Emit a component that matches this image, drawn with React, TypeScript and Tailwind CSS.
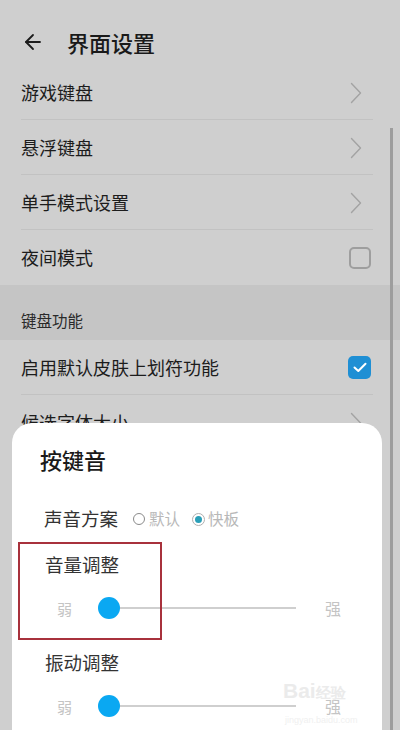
import React from "react";
import { ArrowLeft } from "lucide-react";

const font = { fontFamily: '"Noto Sans CJK SC", "Noto Sans", sans-serif' };

function Chevron() {
  return (
    <svg width="12" height="22" viewBox="0 0 12 22" fill="none" className="mr-[9px]">
      <path d="M1.5 1.5 L10.5 11 L1.5 20.5" stroke="#a3a3a3" strokeWidth="1.4" strokeLinecap="round" strokeLinejoin="round" />
    </svg>
  );
}

function Row({ label, right, divider = true }: { label: string; right: React.ReactNode; divider?: boolean }) {
  return (
    <div className="h-[55px] flex items-center pl-[21px] pr-[29px] relative">
      <span className="text-[18px] text-[#1c1c1c] flex-1">{label}</span>
      {right}
      {divider && <div className="absolute left-[21px] right-[27px] bottom-0 h-px bg-[#c2c2c2]" />}
    </div>
  );
}

function Slider() {
  return (
    <div className="h-[24px] flex items-center pl-[45px]">
      <span className="text-[15px] text-[#c4c4c4] w-[15px] leading-none">弱</span>
      <div className="ml-[26px] w-[22px] h-[22px] rounded-full bg-[#0aa8f2]" />
      <div className="w-[176px] h-[2px] bg-[#cfcfcf]" />
      <span className="ml-[29px] text-[16px] text-[#c4c4c4] leading-none">强</span>
    </div>
  );
}

export default function App() {
  return (
    <div className="w-[400px] h-[730px] bg-[#cfcfcf] relative overflow-hidden" style={font}>
      {/* header */}
      <div className="h-[65px] flex items-start pt-[30px] pl-[21px]">
        <ArrowLeft size={24} strokeWidth={1.8} color="#1c1c1c" />
        <span className="ml-[22px] text-[22px] leading-[28px] -mt-[2px] text-[#1a1a1a] font-medium">界面设置</span>
      </div>
      <Row label="游戏键盘" right={<Chevron />} />
      <Row label="悬浮键盘" right={<Chevron />} />
      <Row label="单手模式设置" right={<Chevron />} />
      <Row
        label="夜间模式"
        divider={false}
        right={<div className="w-[22px] h-[22px] rounded-[5px] border-2 border-[#9e9e9e]" />}
      />
      <div className="h-[55px] bg-[#c5c5c5] pl-[21px] pt-[25px]">
        <span className="text-[15.5px] leading-[20px] text-[#2a2a2a] block">键盘功能</span>
      </div>
      <Row
        label="启用默认皮肤上划符功能"
        right={
          <div className="w-[23px] h-[23px] rounded-[5px] bg-[#1f8fd4] flex items-center justify-center">
            <svg width="14" height="11" viewBox="0 0 14 11" fill="none">
              <path d="M1.5 5.5 L5.3 9 L12.5 1.8" stroke="#fff" strokeWidth="2" strokeLinecap="round" strokeLinejoin="round" />
            </svg>
          </div>
        }
      />
      <Row label="候选字体大小" right={<Chevron />} divider={false} />

      {/* scrollbar */}
      <div className="absolute left-[390px] top-[128px] bottom-0 w-[3px] bg-[#9d9d9d]" />

      {/* bottom sheet dialog */}
      <div className="absolute left-[12px] right-[18px] top-[423px] bottom-0 bg-white rounded-t-[20px] flex flex-col">
        <span className="mt-[23px] pl-[28px] text-[22px] leading-[26px] text-[#1a1a1a] font-medium">按键音</span>
        <div className="mt-[35px] pl-[32px] flex items-center h-[24px]">
          <span className="text-[18.5px] text-[#333]">声音方案</span>
          <div className="ml-[15px] w-[12px] h-[12px] rounded-full border border-[#8a8a8a]" />
          <span className="ml-[4px] text-[15.5px] text-[#b8b8b8]">默认</span>
          <div className="ml-[12px] w-[13px] h-[13px] rounded-full border border-[#b0b0b0] flex items-center justify-center">
            <div className="w-[7px] h-[7px] rounded-full bg-[#2a9fb8]" />
          </div>
          <span className="ml-[3px] text-[15.5px] text-[#b8b8b8]">快板</span>
        </div>
        <span className="mt-[21px] pl-[33px] text-[18.5px] leading-[24px] text-[#333]">音量调整</span>
        <div className="mt-[20px]">
          <Slider />
        </div>
        <span className="mt-[30px] pl-[33px] text-[18.5px] leading-[24px] text-[#333]">振动调整</span>
        <div className="mt-[20px]">
          <Slider />
        </div>
      </div>

      {/* annotation box */}
      <div className="absolute left-[18px] top-[542px] w-[144px] h-[98px] border-2 border-[#a8313c]" />

      {/* watermark */}
      <div className="absolute left-[283px] top-[680px] text-[21px] leading-none text-[#ebebeb] font-bold" style={{ fontFamily: '"Liberation Sans", sans-serif' }}>
        Bai<span className="text-[15px]">经验</span>
      </div>
      <div className="absolute left-[285px] top-[716px] text-[9px] leading-none text-[#f0f0f0]" style={{ fontFamily: '"Liberation Sans", sans-serif' }}>
        jingyan.baidu.com
      </div>
    </div>
  );
}
